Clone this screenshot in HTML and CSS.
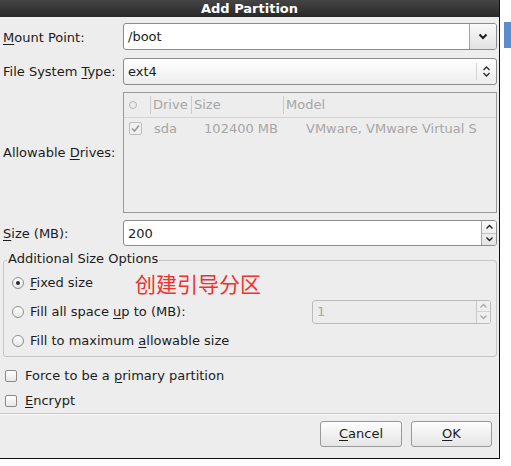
FILE: index.html
```html
<!DOCTYPE html>
<html>
<head>
<meta charset="utf-8">
<title>Add Partition</title>
<link rel="stylesheet" href="styles.css">
</head>
<body>
<div class="desk">
  <div class="dialog">
    <div class="titlebar">Add Partition</div>
    <div class="content">
      <div class="form">
        <div class="lbl"><u>M</u>ount Point:</div>
        <div class="field combo-entry">
          <div class="ctext">/boot</div>
          <div class="cbtn">
            <svg width="10" height="7" viewBox="0 0 10 7"><path d="M1.5 1.5 L5 5 L8.5 1.5" fill="none" stroke="#1e1e1e" stroke-width="2"/></svg>
          </div>
        </div>

        <div class="lbl">File System <u>T</u>ype:</div>
        <div class="field combo-btn">
          <div class="ctext">ext4</div>
          <div class="vline"></div>
          <div class="updown">
            <svg width="9" height="13" viewBox="0 0 9 13"><path d="M1.5 5 L4.5 2 L7.5 5 M1.5 8 L4.5 11 L7.5 8" fill="none" stroke="#2a2a2a" stroke-width="1.3"/></svg>
          </div>
        </div>

        <div class="lbl">Allowable <u>D</u>rives:</div>
        <div class="field drives">
          <div class="thead">
            <div class="th c1"><span class="hcircle"></span></div>
            <div class="th c2">Drive</div>
            <div class="th c3">Size</div>
            <div class="th c4">Model</div>
          </div>
          <div class="tr">
            <div class="td c1">
              <span class="tchk"><svg width="11" height="11" viewBox="0 0 11 11"><path d="M2 5.5 L4.5 8 L9 2.5" fill="none" stroke="#9a9a9a" stroke-width="1.6"/></svg></span>
            </div>
            <div class="td c2 pad4">sda</div>
            <div class="td c3 right">102400 MB</div>
            <div class="td c4 model">VMware, VMware Virtual S</div>
          </div>
        </div>

        <div class="lbl"><u>S</u>ize (MB):</div>
        <div class="field spin">
          <div class="ctext">200</div>
          <div class="sbtns">
            <div class="sb"><svg width="9" height="6" viewBox="0 0 9 6"><path d="M1.5 4.5 L4.5 1.5 L7.5 4.5" fill="none" stroke="#222" stroke-width="1.4"/></svg></div>
            <div class="sb sb-low"><svg width="9" height="6" viewBox="0 0 9 6"><path d="M1.5 1.5 L4.5 4.5 L7.5 1.5" fill="none" stroke="#222" stroke-width="1.4"/></svg></div>
          </div>
        </div>
      </div>

      <div class="group">
        <div class="legend">Additional Size Options</div>
        <div class="opt">
          <span class="radio checked"></span>
          <span class="otext"><u>F</u>ixed size</span>
          <span class="note">创建引导分区</span>
        </div>
        <div class="opt">
          <span class="radio"></span>
          <span class="otext">Fill all space <u>u</u>p to (MB):</span>
          <div class="spin dis">
            <div class="ctext">1</div>
            <div class="sbtns">
              <div class="sb"><svg width="9" height="6" viewBox="0 0 9 6"><path d="M1.5 4.5 L4.5 1.5 L7.5 4.5" fill="none" stroke="#a8a8a8" stroke-width="1.3"/></svg></div>
              <div class="sb sb-low"><svg width="9" height="6" viewBox="0 0 9 6"><path d="M1.5 1.5 L4.5 4.5 L7.5 1.5" fill="none" stroke="#a8a8a8" stroke-width="1.3"/></svg></div>
            </div>
          </div>
        </div>
        <div class="opt">
          <span class="radio"></span>
          <span class="otext">Fill to maximum <u>a</u>llowable size</span>
        </div>
      </div>

      <div class="checks">
        <div class="crow"><span class="chk"></span><span>Force to be a <u>p</u>rimary partition</span></div>
        <div class="crow"><span class="chk"></span><span><u>E</u>ncrypt</span></div>
      </div>
    </div>
    <div class="hsep"></div>
    <div class="actions">
      <div class="button cancel"><u>C</u>ancel</div>
      <div class="button ok"><u>O</u>K</div>
    </div>
  </div>
  <div class="side">
    <div class="bluetab"></div>
  </div>
</div>
</body>
</html>
```

FILE: styles.css
```css
* { box-sizing: border-box; }
html, body { margin: 0; padding: 0; }
body {
  width: 511px;
  height: 466px;
  overflow: hidden;
  background: #ffffff;
  font-family: "DejaVu Sans", "Noto Sans CJK SC", sans-serif;
  font-size: 13px;
  color: #1c1c1c;
}
u { text-decoration: underline; text-underline-offset: 2px; text-decoration-thickness: 1px; }

.desk { display: flex; align-items: flex-start; }
.side { flex: 1; padding-top: 22px; }
.bluetab { height: 26px; margin-left: 4px; background: #5b8ccb; }

.dialog {
  width: 500px;
  height: 459px;
  background: #ededed;
  border-right: 1px solid #111;
  border-bottom: 1px solid #111;
  display: flex;
  flex-direction: column;
}
.titlebar {
  height: 17px;
  line-height: 17px;
  text-align: center;
  color: #fff;
  font-weight: bold;
  background: linear-gradient(#454545, #282828);
}
.content { padding: 6px 2px 0 3px; }

.form {
  display: grid;
  grid-template-columns: 120px 374px;
  grid-template-rows: 28px 27px 121px 26px;
  row-gap: 7px;
  align-items: center;
}
.lbl { white-space: nowrap; }
.lbl.first { margin-top: -1px; }
.field { align-self: start; }

.ctext { flex: 1; padding-left: 4px; line-height: 25px; white-space: nowrap; }

.combo-entry {
  display: flex;
  height: 27px;
  border: 1px solid #8c8c8c;
  border-radius: 3px;
  background: #fff;
}
.cbtn {
  width: 27px;
  border-left: 1px solid #a4a4a4;
  border-radius: 0 2px 2px 0;
  background: linear-gradient(#f9f9f9, #e2e2e2);
  display: flex;
  align-items: center;
  justify-content: center;
}

.combo-btn {
  display: flex;
  align-items: center;
  height: 27px;
  border: 1px solid #8c8c8c;
  border-radius: 3px;
  background: linear-gradient(#ffffff, #ededed);
}
.vline { width: 1px; height: 17px; background: #d2d2d2; }
.updown { width: 19px; display: flex; align-items: center; justify-content: center; }

.drives {
  height: 121px;
  border: 1px solid #9a9a9a;
  background: #ededed;
  color: #a6a6a6;
}
.thead {
  display: flex;
  align-items: center;
  height: 25px;
  border-bottom: 1px solid #d4d4d4;
}
.th { height: 18px; line-height: 18px; padding-left: 2px; white-space: nowrap; }
.th + .th { border-left: 1px solid #cbcbcb; }
.c1 { width: 26px; flex: none; }
.c2 { width: 41px; flex: none; }
.c3 { width: 92px; flex: none; }
.c4 { flex: 1; min-width: 0; }
.th.c1 { display: flex; align-items: center; padding-left: 5px; }
.hcircle { width: 8px; height: 8px; border: 1px solid #b4b4b4; border-radius: 50%; }

.tr { display: flex; align-items: center; height: 21px; }
.td { white-space: nowrap; }
.td.c1 { display: flex; padding-left: 5px; }
.tchk {
  width: 13px; height: 13px;
  border: 1px solid #bdbdbd;
  border-radius: 2px;
  background: #f1f1f1;
  display: flex; align-items: center; justify-content: center;
}
.pad4 { padding-left: 4px; }
.right { text-align: right; padding-right: 5px; }
.model { padding-left: 23px; overflow: hidden; }

.spin {
  display: flex;
  height: 26px;
  border: 1px solid #8c8c8c;
  border-radius: 3px;
  background: #fff;
}
.sbtns {
  width: 15px;
  border-left: 1px solid #a4a4a4;
  display: flex;
  flex-direction: column;
  background: linear-gradient(#f8f8f8, #e4e4e4);
  border-radius: 0 2px 2px 0;
}
.sb { flex: 1; display: flex; align-items: center; justify-content: center; }
.sb-low { border-top: 1px solid #c4c4c4; }

.group {
  margin-top: 14px;
  border: 1px solid #c6c6c6;
  border-radius: 3px;
  padding-bottom: 1px;
}
.legend {
  margin: -10px 0 1px 3px;
  padding: 0 1px;
  width: fit-content;
  line-height: 16px;
  background: #ededed;
}
.opt { display: flex; align-items: center; height: 29px; padding-left: 8px; }
.radio {
  width: 12px; height: 12px;
  border: 1px solid #8e8e8e;
  border-radius: 50%;
  background: linear-gradient(#ffffff, #e6e6e6);
  display: flex; align-items: center; justify-content: center;
  margin-right: 6px;
  flex: none;
}
.radio.checked::after {
  content: "";
  width: 4px; height: 4px;
  border-radius: 50%;
  background: #2a2a2a;
}
.otext { white-space: nowrap; }
.note {
  margin-left: 42px;
  color: #f2302e;
  font-family: "Noto Sans CJK SC", sans-serif;
  font-size: 21px;
  line-height: 24px;
}
.spin.dis {
  margin-left: auto;
  margin-right: 5px;
  width: 179px;
  height: 24px;
  border-color: #bcbcbc;
  background: #ececec;
  color: #a8a8a8;
}
.spin.dis .ctext { line-height: 22px; }
.spin.dis .sbtns { width: 14px; border-left-color: #c8c8c8; background: #efefef; }
.spin.dis .sb-low { border-top-color: #d4d4d4; }

.checks { margin-top: 6px; }
.crow { display: flex; align-items: center; height: 25px; padding-left: 2px; white-space: nowrap; }
.chk {
  width: 12px; height: 12px;
  border: 1px solid #8a8a8a;
  border-radius: 2px;
  background: linear-gradient(#ffffff, #e8e8e8);
  margin-right: 8px;
  flex: none;
}

.hsep { height: 1px; background: #cacaca; box-shadow: 0 1px 0 #f8f8f8; }
.actions {
  display: flex;
  justify-content: flex-end;
  gap: 9px;
  padding: 7px 7px 0 0;
}
.button {
  height: 26px;
  line-height: 24px;
  text-align: center;
  border: 1px solid #999;
  border-radius: 3px;
  background: linear-gradient(#fdfdfd, #e5e5e5);
}
.cancel { width: 82px; }
.ok { width: 81px; }
```
